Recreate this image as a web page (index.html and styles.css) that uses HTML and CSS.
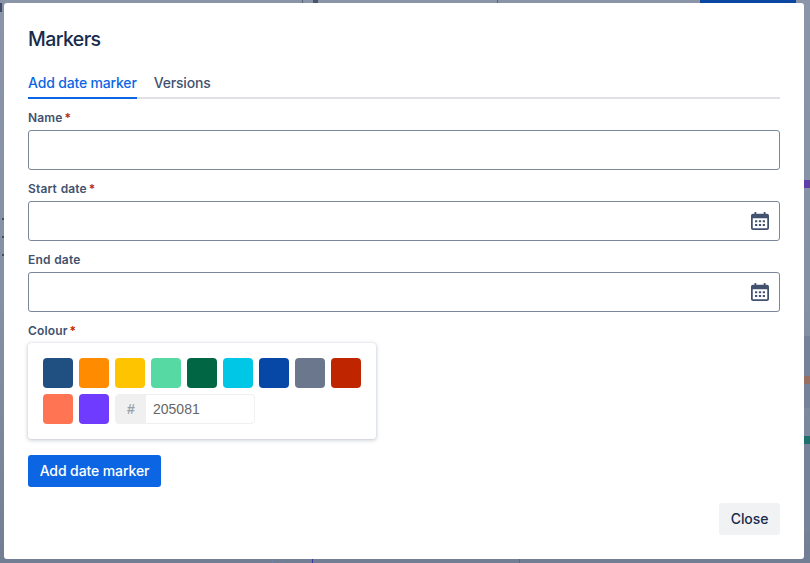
FILE: index.html
```html
<!DOCTYPE html>
<html lang="en">
<head>
    <meta charset="UTF-8">
    <meta name="viewport" content="width=device-width, initial-scale=1.0">
    <title>Markers</title>
    <link rel="stylesheet" href="styles.css">
</head>
<body>
    <!-- Bits of the page showing behind the dialog -->
    <div class="backdrop">
        <div class="bg-button"></div>
        <div class="bg-line bg-line-a"></div>
        <div class="bg-line bg-line-b"></div>
        <div class="bg-icon"></div>
        <div class="bg-corner"></div>
        <div class="bg-tick bg-tick-a"></div>
        <div class="bg-tick bg-tick-b"></div>
        <div class="bg-tick bg-tick-c"></div>
        <div class="bg-foot bg-foot-a"></div>
        <div class="bg-foot bg-foot-b"></div>
        <div class="bg-foot bg-foot-c"></div>
        <div class="bg-band bg-band-a"></div>
        <div class="bg-band bg-band-b"></div>
        <div class="bg-bar bg-purple"></div>
        <div class="bg-bar bg-brown"></div>
        <div class="bg-bar bg-green"></div>
    </div>

    <div class="dialog">
        <h1>Markers</h1>

        <div class="tabs">
            <div class="tab active">Add date marker</div>
            <div class="tab">Versions</div>
        </div>

        <div class="field">
            <label>Name<span class="required">*</span></label>
            <div class="input"></div>
        </div>

        <div class="field">
            <label>Start date<span class="required">*</span></label>
            <div class="input">
                <svg class="calendar" viewBox="0.8 0.8 16.4 16.4"><path d="M4 0.8h1.6v1.7h6.8V0.8H14v1.7h1.400c1 0 1.800.8 1.800 1.800v11.100c0 1-.8 1.800-1.800 1.800H2.600c-1 0-1.800-.8-1.800-1.800V4.300c0-1 .8-1.800 1.800-1.800H4z" fill="#42526e"/><path d="M2.400 6.600h13.200v8.700c0 .2-.1.300-.3.300H2.700c-.2 0-.3-.1-.3-.3z" fill="#fff"/><path d="M4.500 8.300h2v1.900h-2zM8 8.300h2v1.900H8zM11.500 8.300h2v1.900h-2zM4.500 11.700h2v1.900h-2zM8 11.700h2v1.900H8zM11.500 11.700h2v1.900h-2z" fill="#42526e"/></svg>
            </div>
        </div>

        <div class="field">
            <label>End date</label>
            <div class="input">
                <svg class="calendar" viewBox="0.8 0.8 16.4 16.4"><path d="M4 0.8h1.6v1.7h6.8V0.8H14v1.7h1.400c1 0 1.800.8 1.800 1.800v11.100c0 1-.8 1.800-1.800 1.800H2.600c-1 0-1.800-.8-1.800-1.800V4.300c0-1 .8-1.800 1.800-1.800H4z" fill="#42526e"/><path d="M2.400 6.600h13.200v8.700c0 .2-.1.300-.3.300H2.700c-.2 0-.3-.1-.3-.3z" fill="#fff"/><path d="M4.500 8.300h2v1.900h-2zM8 8.300h2v1.900H8zM11.500 8.300h2v1.900h-2zM4.500 11.700h2v1.900h-2zM8 11.700h2v1.900H8zM11.500 11.700h2v1.900h-2z" fill="#42526e"/></svg>
            </div>
        </div>

        <div class="field">
            <label>Colour<span class="required">*</span></label>
            <div class="picker">
                <div class="swatch c1"></div>
                <div class="swatch c2"></div>
                <div class="swatch c3"></div>
                <div class="swatch c4"></div>
                <div class="swatch c5"></div>
                <div class="swatch c6"></div>
                <div class="swatch c7"></div>
                <div class="swatch c8"></div>
                <div class="swatch c9"></div>
                <div class="swatch c10"></div>
                <div class="swatch c11"></div>
                <div class="hex">
                    <span class="hash">#</span>
                    <span class="hex-value">205081</span>
                </div>
            </div>
        </div>

        <button class="btn-primary">Add date marker</button>

        <div class="footer">
            <button class="btn-subtle">Close</button>
        </div>
    </div>
</body>
</html>
```

FILE: styles.css
```css
html, body {
    margin: 0;
    height: 100%;
}
body {
    font-family: Inter, "Liberation Sans", sans-serif;
    background: linear-gradient(to bottom, #8a95a8 0, #8490a4 55%, #727e93 100%);
    color: #172b4d;
    height: 563px;
    overflow: hidden;
    box-sizing: border-box;
    padding: 3px 6px 4px 4px;
}
.backdrop div {
    position: absolute;
}
.bg-button {
    left: 700px;
    top: 0;
    width: 96px;
    height: 3px;
    background: #0b47a1;
}
.bg-line {
    top: 0;
    width: 1px;
    height: 3px;
    background: #56627a;
}
.bg-line-a {
    left: 497px;
}
.bg-line-b {
    left: 302px;
}
.bg-icon {
    left: 313px;
    top: 0;
    width: 5px;
    height: 3px;
    background: #4a566e;
}
.bg-corner {
    left: 0;
    top: 3px;
    width: 2px;
    height: 9px;
    background: #3f4d6a;
}
.bg-tick {
    left: 2px;
    width: 2px;
    height: 2px;
    background: #3c4a6c;
}
.bg-tick-a {
    top: 218px;
}
.bg-tick-b {
    top: 236px;
}
.bg-tick-c {
    top: 254px;
}
.bg-foot {
    top: 559px;
    width: 1px;
    height: 4px;
    background: #5d6a82;
}
.bg-foot-a {
    left: 272px;
    background: #6f86a8;
}
.bg-foot-b {
    left: 312px;
    background: #3a35a0;
}
.bg-foot-c {
    left: 519px;
}
.bg-band {
    left: 804px;
    width: 6px;
    background: #76829a;
}
.bg-band-a {
    top: 336px;
    height: 72px;
}
.bg-band-b {
    top: 444px;
    height: 88px;
}
.bg-bar {
    left: 804px;
    width: 6px;
    height: 8px;
}
.bg-purple {
    top: 180px;
    background: #5e3ea8;
}
.bg-brown {
    top: 376px;
    background: #9a6f62;
}
.bg-green {
    top: 436px;
    background: #1f6f6a;
}
.dialog {
    position: relative;
    width: 800px;
    height: 556px;
    box-sizing: border-box;
    background: #fff;
    border-radius: 3px;
    padding: 24px;
    display: flex;
    flex-direction: column;
}
h1 {
    margin: 0;
    font-size: 19.5px;
    line-height: 24px;
    font-weight: 500;
    letter-spacing: -0.6px;
}
.tabs {
    display: flex;
    gap: 17px;
    margin-top: 20px;
    height: 26px;
    border-bottom: 2px solid #dfe1e6;
    font-size: 14px;
    font-weight: 500;
    color: #42526e;
}
.tab {
    line-height: 24px;
    height: 26px;
    box-sizing: border-box;
    letter-spacing: -0.17px;
}
.tab.active {
    color: #0c66e4;
    height: 28px;
    border-bottom: 2px solid #0c66e4;
}
.field label {
    display: block;
    margin-top: 10px;
    margin-bottom: 5px;
    height: 16px;
    line-height: 18px;
    font-size: 12px;
    font-weight: 600;
    color: #42526e;
    letter-spacing: 0.15px;
    word-spacing: 0.5px;
}
.required {
    color: #bf2600;
    margin-left: 2px;
}
.input {
    height: 40px;
    box-sizing: border-box;
    border: 1px solid #7a869a;
    border-radius: 3px;
    display: flex;
    align-items: center;
    justify-content: flex-end;
    padding-right: 10px;
}
.calendar {
    width: 18px;
    height: 18px;
}
.picker {
    width: 348px;
    height: 96px;
    box-sizing: border-box;
    padding: 15px;
    display: flex;
    flex-wrap: wrap;
    align-content: flex-start;
    gap: 6px;
    background: #fff;
    border-radius: 3px;
    box-shadow: 0 1px 4px rgba(9, 30, 66, 0.25), 0 0 1px rgba(9, 30, 66, 0.2);
}
.swatch {
    width: 30px;
    height: 30px;
    border-radius: 4px;
}
.c1 { background: #205081; }
.c2 { background: #ff8b00; }
.c3 { background: #ffc400; }
.c4 { background: #57d9a3; }
.c5 { background: #006644; }
.c6 { background: #00c7e6; }
.c7 { background: #0747a6; }
.c8 { background: #6b778c; }
.c9 { background: #bf2600; }
.c10 { background: #ff7452; }
.c11 { background: #6f3cff; }
.hex {
    width: 140px;
    height: 30px;
    box-sizing: border-box;
    display: flex;
    border: 1px solid #f0f0f0;
    border-radius: 4px;
    font-family: "Liberation Sans", sans-serif;
    font-size: 14px;
}
.hash {
    width: 30px;
    background: #f0f0f0;
    color: #98a1ab;
    text-align: center;
    line-height: 28px;
    font-weight: 700;
}
.hex-value {
    padding-left: 7px;
    line-height: 28px;
    color: #666;
}
button {
    font-family: inherit;
    font-size: 14px;
    font-weight: 500;
    letter-spacing: -0.1px;
    border: none;
    border-radius: 3px;
    height: 32px;
    flex-shrink: 0;
    cursor: pointer;
    padding: 0 0 2px;
}
.btn-primary {
    align-self: flex-start;
    margin-top: 16px;
    width: 133px;
    background: #0c66e4;
    color: #fff;
}
.footer {
    display: flex;
    justify-content: flex-end;
    margin-top: 16px;
}
.btn-subtle {
    width: 61px;
    background: #f1f2f4;
    color: #172b4d;
}
```
